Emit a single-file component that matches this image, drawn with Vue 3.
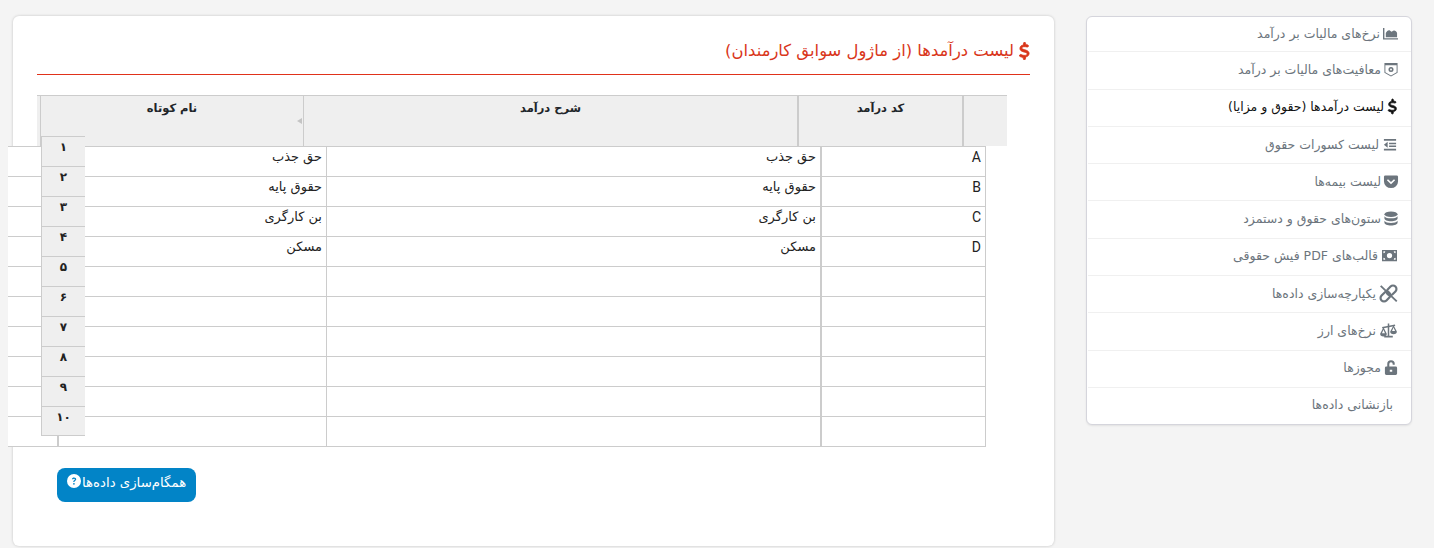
<template>
  <div class="page">
    <div class="main-card">
      <h3 class="title">
        <svg class="title-icon" viewBox="0 0 320 512"><path :d="dollarPath" /></svg>
        <span>لیست درآمدها (از ماژول سوابق کارمندان)</span>
      </h3>
      <div class="sheet">
        <div class="sheet-head">
          <div class="hcell-gutter"></div>
          <div class="hcell hcell-name">نام کوتاه<i class="sort-arrow"></i></div>
          <div class="hcell hcell-desc">شرح درآمد</div>
          <div class="hcell hcell-code">کد درآمد</div>
          <div class="hcell hcell-corner"></div>
        </div>
        <div class="sheet-body">
          <div class="row" v-for="(r, i) in rows" :key="i">
            <div class="cell cell-code">{{ r.code }}</div>
            <div class="cell cell-desc">{{ r.desc }}</div>
            <div class="cell cell-name">{{ r.name }}</div>
            <div class="cell cell-stub"></div>
          </div>
        </div>
        <div class="row-index">
          <div class="index-cell" v-for="n in indexes" :key="n">{{ n }}</div>
        </div>
      </div>
      <button class="sync-btn">
        <svg class="help-icon" viewBox="0 0 16 16">
          <circle cx="8" cy="8" r="8" fill="#fff" />
          <path d="M5.6 6.1C5.7 4.7 6.7 4 8.1 4c1.4 0 2.4.8 2.4 2 0 .9-.5 1.4-1.2 1.8-.6.4-.7.6-.7 1.2H7.2c0-1 .3-1.5 1-1.9.5-.3.8-.6.8-1 0-.5-.4-.8-.9-.8-.6 0-1 .3-1 .8H5.6z" fill="#0284c7" />
          <circle cx="7.9" cy="11.2" r="1" fill="#0284c7" />
        </svg>
        <span>همگام‌سازی داده‌ها</span>
      </button>
    </div>
    <nav class="side-card">
      <a class="side-item" v-for="item in menu" :key="item.label" :class="{ active: item.active, plain: !item.icon }">
        <svg v-if="item.icon" class="side-icon" :style="{ width: item.w + 'px' }" :viewBox="item.box" v-html="item.icon"></svg>
        <span>{{ item.label }}</span>
      </a>
    </nav>
  </div>
</template>

<script setup>
const dollarPath = 'M160 0c17.7 0 32 14.3 32 32V67.7c1.6.2 3.1.4 4.7.7 10.6 1.6 42.1 6.7 55.1 10 17.1 4.3 27.5 21.7 23.2 38.9s-21.7 27.5-38.9 23.2c-9.3-2.4-37.6-7-48.9-8.7-32.1-4.7-59.6-2.4-78.5 6-18.4 8.1-23.4 18.3-24.5 24.2-1.8 10.1-.4 15.7 1.3 19.2 1.8 3.7 5.2 7.8 11.9 12.3 15.1 9.9 38.2 16.8 68.2 25.8l3.1.9c26.5 8 59.2 17.9 83.5 34 13.3 8.8 25.8 20.7 33.5 37.2 7.8 16.8 9.4 35.5 5.8 55-6.4 35.5-30.8 59.4-61.3 72.4-12.9 5.5-27 9-41.5 11V480c0 17.7-14.3 32-32 32s-32-14.3-32-32V445.1c-.4-.1-.9-.1-1.3-.2l-.2 0c-24.4-3.8-64.5-14.3-91.5-26.3-16.1-7.2-23.4-26.1-16.2-42.2s26.1-23.4 42.2-16.2c20.9 9.3 55.3 18.4 75.2 21.5 31.9 4.7 58.2 2 76-5.3 16.9-6.9 24.6-16.9 26.8-28.9 1.9-10.6.4-16.7-1.3-20.4-1.9-4-5.6-8.4-12.8-13.2-16.3-10.7-39.7-17.7-70-26.7l-2.4-.7c-25.8-7.8-57.6-17.4-81.4-33.1-13.1-8.7-25.4-20.5-33-36.8-7.7-16.4-9.3-34.7-5.8-54.3 6.4-35.2 30.8-58.6 60.6-71.7 13-5.7 27.3-9.3 42-11.4V32c0-17.7 14.3-32 32-32z'

const rows = [
  { code: 'A', desc: 'حق جذب', name: 'حق جذب' },
  { code: 'B', desc: 'حقوق پایه', name: 'حقوق پایه' },
  { code: 'C', desc: 'بن کارگری', name: 'بن کارگری' },
  { code: 'D', desc: 'مسکن', name: 'مسکن' },
  { code: '', desc: '', name: '' },
  { code: '', desc: '', name: '' },
  { code: '', desc: '', name: '' },
  { code: '', desc: '', name: '' },
  { code: '', desc: '', name: '' },
  { code: '', desc: '', name: '' }
]

const indexes = ['۱', '۲', '۳', '۴', '۵', '۶', '۷', '۸', '۹', '۱۰']

const menu = [
  { label: 'نرخ‌های مالیات بر درآمد', w: 17, box: '0 0 16 16', icon: '<path d="M0 2h1.5v11H16v1.5H0z"/><path d="M3 12V7.5C4 5.500 5.5 4 7 4.5l2 1.500 2-1c1.500-.5 3.500.5 4 2.500V12z"/>' },
  { label: 'معافیت‌های مالیات بر درآمد', w: 16, box: '0 0 16 16', icon: '<path fill-rule="evenodd" d="M1 1h14v10.5L8 15.5l-7-4zM2 3.5v7.400L8 14.300l6-3.400V3.500z"/><path fill-rule="evenodd" d="M8 5.300a2.700 2.700 0 1 0 0 5.400 2.700 2.700 0 0 0 0-5.400zM8 7a1 1 0 1 1 0 2 1 1 0 0 1 0-2z"/>' },
  { label: 'لیست درآمدها (حقوق و مزایا)', active: true, w: 13, box: '0 0 320 512', icon: `<path d="${dollarPath}" stroke="#111" stroke-width="24"/>` },
  { label: 'لیست کسورات حقوق', w: 18, box: '0 0 16 16', icon: '<path d="M1.5 2h13v2h-13zM7 6h7.5v1.600H7zM7 9h7.5v1.600H7zM1.5 12.500h13v2h-13zM5.500 5v6.500L1.500 8.200z"/>' },
  { label: 'لیست بیمه‌ها', w: 16, box: '0 0 16 16', icon: '<path fill-rule="evenodd" d="M2 1.500h12A1.500 1.500 0 0 1 15.500 3v5a7.500 7 0 0 1-15 0V3A1.500 1.500 0 0 1 2 1.500zM4.800 5.500 3.600 6.700 8 11l4.400-4.300-1.200-1.200L8 8.600z"/>' },
  { label: 'ستون‌های حقوق و دستمزد', w: 16, box: '0 0 16 16', icon: '<ellipse cx="8" cy="3.500" rx="7" ry="3"/><path d="M1 5.500c1 1.600 3.700 2.300 7 2.300s6-.7 7-2.300V8c0 1.700-3.100 3-7 3s-7-1.300-7-3zM1 10.500c1 1.600 3.700 2.300 7 2.300s6-.7 7-2.300v2c0 1.700-3.100 3-7 3s-7-1.300-7-3z"/>' },
  { label: 'قالب‌های PDF فیش حقوقی', w: 19, box: '-1 -2 18 16', icon: '<path fill-rule="evenodd" d="M0 0h16v12H0zM8 3.200a2.800 2.800 0 1 0 0 5.600 2.800 2.800 0 0 0 0-5.600zM1.500 1.500v2a2 2 0 0 0 2-2zM12.500 1.500a2 2 0 0 0 2 2v-2zM1.500 8.500v2h2a2 2 0 0 0-2-2zM14.500 8.500a2 2 0 0 0-2 2h2z"/>' },
  { label: 'یکپارچه‌سازی داده‌ها', w: 21, box: '1.500 1.500 13 13', icon: '<g transform="rotate(-45 8 8)" fill="none" stroke="#6c757d" stroke-width="1.900"><rect x="-.5" y="5" width="9.500" height="6" rx="3"/><rect x="7" y="5" width="9.500" height="6" rx="3"/></g><path d="M1.800.8 15.700 14.300l-1.100 1.100L.7 1.900z"/>' },
  { label: 'نرخ‌های ارز', w: 21, box: '1 1 14 14', icon: '<path d="M7.300 1.500h1.400V13H12v1.500H4V13h3.300z"/><path d="M2 4.800 14 2.500l.3 1.300L2.300 6.100z"/><path fill-rule="evenodd" d="M3.300 5 .2 11a3.100 2.600 0 0 0 6.200 0zM3.300 7.300 1.900 10.500h2.800zM12.700 3 9.600 9a3.100 2.600 0 0 0 6.200 0zM12.700 5.300 11.300 8.500h2.800z"/>' },
  { label: 'مجوزها', w: 16, box: '0 0 16 16', icon: '<path fill-rule="evenodd" d="M3 7h10a1.500 1.500 0 0 1 1.500 1.500v6A1.500 1.500 0 0 1 13 16H3a1.500 1.500 0 0 1-1.500-1.500v-6A1.500 1.500 0 0 1 3 7zM6.700 10.500v2h2.600v-2z"/><path d="M4 7.500V4.200a4 4 0 0 1 8 0v.8h-2.200v-.8a1.800 1.800 0 0 0-3.600 0v3.300z"/>' },
  { label: 'بازنشانی داده‌ها', box: '', icon: '' }
]
</script>

<style>
html, body {
  margin: 0;
  background: #f4f4f4;
}
</style>

<style scoped>
.page {
  width: 1434px;
  height: 548px;
  box-sizing: border-box;
  padding: 16px 22px 0 13px;
  display: flex;
  align-items: flex-start;
  gap: 32px;
  overflow: hidden;
  font-family: "DejaVu Sans", "Noto Sans", sans-serif;
  color: #212529;
}

.main-card {
  width: 1041px;
  height: 530px;
  box-sizing: border-box;
  flex-shrink: 0;
  background: #fff;
  border-radius: 6px;
  box-shadow: 0 0 3px rgba(0, 0, 0, 0.2);
  padding: 24px 24px 0;
}

.title {
  margin: 0 0 20px;
  height: 35px;
  box-sizing: border-box;
  border-bottom: 1px solid #e0321a;
  direction: rtl;
  display: flex;
  align-items: flex-start;
  gap: 5px;
  color: #d9361a;
  font-size: 16.4px;
  font-weight: 400;
  line-height: 22px;
}

.title-icon {
  width: 11px;
  height: 18px;
  margin-top: 2px;
  fill: #d9361a;
  stroke: #d9361a;
  stroke-width: 24;
}

.sheet {
  position: relative;
  width: 970px;
}

.sheet-head {
  display: flex;
  height: 51px;
  box-sizing: border-box;
  width: 970px;
  font-size: 11.5px;
  font-weight: 700;
  background: #efefef;
  border-top: 1px solid #ccc;
}

.hcell {
  box-sizing: border-box;
  height: 50px;
  padding-top: 3px;
  text-align: center;
  position: relative;
  direction: rtl;
  line-height: 18px;
  border-right: 1px solid #ccc;
}

.hcell-gutter {
  width: 4px;
  border-right: 1px solid #ccc;
  box-sizing: border-box;
}

.hcell-name {
  width: 263px;
}

.hcell-desc {
  width: 495px;
  border-right-width: 2px;
}

.hcell-code {
  width: 165px;
  border-right-width: 2px;
}

.hcell-corner {
  width: 43px;
  border-right: 0;
}

.sort-arrow {
  position: absolute;
  right: 1px;
  top: 22px;
  width: 0;
  height: 0;
  border-top: 3.5px solid transparent;
  border-bottom: 3.5px solid transparent;
  border-right: 5px solid #c4c4c4;
}

.sheet-body {
  width: 978px;
  margin-left: -29px;
  position: relative;
  background: #fff;
  border-top: 1px solid #ccc;
  box-sizing: border-box;
}

.row {
  display: flex;
  flex-direction: row-reverse;
  height: 30px;
  box-sizing: border-box;
  border-bottom: 1px solid #ccc;
  font-size: 13px;
  color: #222;
}

.cell {
  box-sizing: border-box;
  padding: 0 4px;
  line-height: 20px;
  text-align: right;
  direction: rtl;
  border-left: 1px solid #ccc;
}

.cell-code {
  width: 166px;
  border-left-width: 2px;
  border-right: 1px solid #ccc;
  direction: ltr;
  font-family: Roboto, sans-serif;
  font-size: 14px;
}

.cell-desc {
  width: 494px;
}

.cell-name {
  width: 269px;
  border-left-width: 2px;
}

.cell-stub {
  flex: 1;
  border-left: 0;
}

.row-index {
  position: absolute;
  left: 4px;
  top: 41px;
  width: 44px;
  border-left: 1px solid #ccc;
  box-sizing: border-box;
  background: #efefef;
}

.index-cell {
  height: 30px;
  box-sizing: border-box;
  border-top: 1px solid #ccc;
  text-align: center;
  font-size: 12px;
  font-weight: 700;
  line-height: 20px;
  color: #222;
}

.index-cell:last-child {
  border-bottom: 1px solid #ccc;
}

.sync-btn {
  display: flex;
  align-items: flex-start;
  gap: 1px;
  margin: 21px 0 0 20px;
  width: 139px;
  height: 34px;
  padding: 6px 10px;
  box-sizing: border-box;
  border: 0;
  border-radius: 8px;
  background: #0284c7;
  color: #fff;
  font-family: inherit;
  font-size: 13.3px;
  line-height: 18px;
  white-space: nowrap;
}

.help-icon {
  width: 14px;
  height: 14px;
  flex-shrink: 0;
}

.side-card {
  width: 326px;
  box-sizing: border-box;
  background: #fff;
  border: 1px solid #d5d5dc;
  border-radius: 6px;
  padding-left: 1px;
  box-shadow: 0 1px 2px rgba(0, 0, 0, 0.08);
}

.side-item {
  display: flex;
  direction: rtl;
  align-items: center;
  gap: 2px;
  height: 37.3px;
  box-sizing: border-box;
  padding: 0 12px 2px;
  border-bottom: 1px solid #f0f0f0;
  font-size: 12.5px;
  color: #6c757d;
}

.side-item:first-child {
  height: 35.3px;
}

.side-item:last-child {
  height: 36px;
  border-bottom: 0;
}

.side-item.active {
  color: #111;
}

.side-item.plain {
  padding-right: 18px;
}

.side-icon {
  height: 15px;
  fill: #6c757d;
  flex-shrink: 0;
  overflow: visible;
}

.side-item.active .side-icon {
  fill: #111;
}
</style>
